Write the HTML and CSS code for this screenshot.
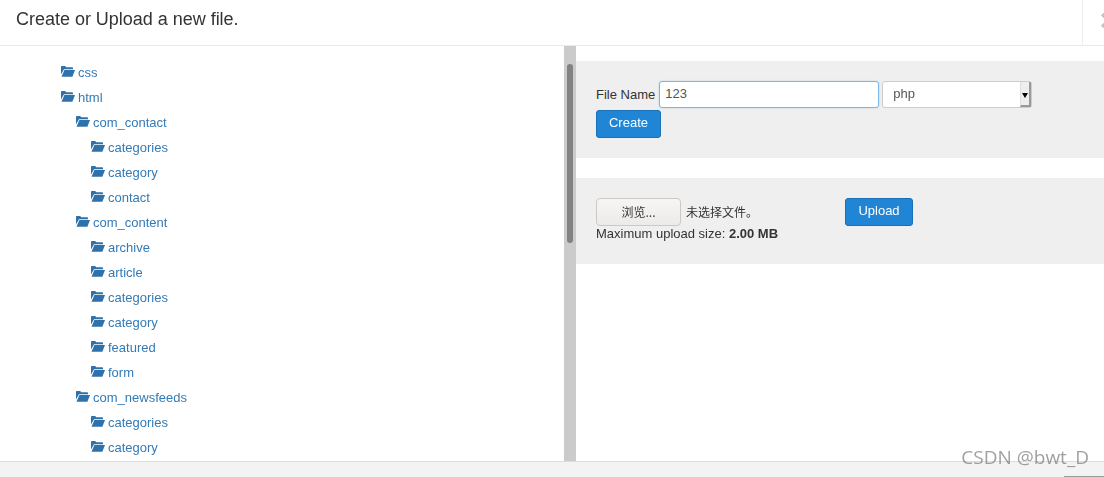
FILE: index.html
```html
<!DOCTYPE html>
<html lang="en">
<head>
  <meta charset="UTF-8">
  <title>Create or Upload a new file</title>
  <link rel="stylesheet" href="styles.css">
</head>
<body>
<svg class="sprite" width="0" height="0">
  <symbol id="folder" viewBox="0 0 14 11">
    <path d="M0 1C0 .4.4 0 1 0h3.2l1 1.3H11c.6 0 1 .4 1 1v1H3L0 8.4z"/>
    <path d="M3.4 3.9H14L11.4 10.8H.5z"/>
  </symbol>
</svg>

<div class="modal">
  <div class="modal-header">
    <h3>Create or Upload a new file.</h3>
    <div class="close-box">
      <svg class="close" viewBox="0 0 14 14"><path d="M1 1l12 12M13 1L1 13"/></svg>
    </div>
  </div>

  <div class="modal-body">
    <div class="tree-col">
      <ul class="tree">
        <li><a href="#"><svg class="icon"><use href="#folder"/></svg>css</a></li>
        <li><a href="#"><svg class="icon"><use href="#folder"/></svg>html</a>
          <ul>
            <li><a href="#"><svg class="icon"><use href="#folder"/></svg>com_contact</a>
              <ul>
                <li><a href="#"><svg class="icon"><use href="#folder"/></svg>categories</a></li>
                <li><a href="#"><svg class="icon"><use href="#folder"/></svg>category</a></li>
                <li><a href="#"><svg class="icon"><use href="#folder"/></svg>contact</a></li>
              </ul>
            </li>
            <li><a href="#"><svg class="icon"><use href="#folder"/></svg>com_content</a>
              <ul>
                <li><a href="#"><svg class="icon"><use href="#folder"/></svg>archive</a></li>
                <li><a href="#"><svg class="icon"><use href="#folder"/></svg>article</a></li>
                <li><a href="#"><svg class="icon"><use href="#folder"/></svg>categories</a></li>
                <li><a href="#"><svg class="icon"><use href="#folder"/></svg>category</a></li>
                <li><a href="#"><svg class="icon"><use href="#folder"/></svg>featured</a></li>
                <li><a href="#"><svg class="icon"><use href="#folder"/></svg>form</a></li>
              </ul>
            </li>
            <li><a href="#"><svg class="icon"><use href="#folder"/></svg>com_newsfeeds</a>
              <ul>
                <li><a href="#"><svg class="icon"><use href="#folder"/></svg>categories</a></li>
                <li><a href="#"><svg class="icon"><use href="#folder"/></svg>category</a></li>
              </ul>
            </li>
          </ul>
        </li>
      </ul>
    </div>

    <div class="scrollbar"><div class="thumb"></div></div>

    <div class="form-col">
      <form class="well well-create">
        <div class="create-row">
          <label>File Name</label>
          <input class="name-input" type="text" value="123">
          <div class="fake-select">
            <span>php</span>
            <span class="select-btn"><i class="caret"></i></span>
          </div>
        </div>
        <button class="btn" type="button">Create</button>
      </form>

      <form class="well well-upload">
        <div class="upload-row">
          <div class="file-field">
            <button class="browse" type="button">浏览...</button>
            <span class="no-file">未选择文件。</span>
          </div>
          <button class="btn btn-upload" type="button">Upload</button>
        </div>
        <div class="max-size">Maximum upload size: <strong>2.00 MB</strong></div>
      </form>
    </div>
  </div>

  <div class="modal-footer"><div class="footer-edge"></div></div>
</div>

<div class="watermark">CSDN @bwt_D</div>
</body>
</html>
```

FILE: styles.css
```css
* {
  box-sizing: border-box;
}

html, body {
  margin: 0;
  height: 100%;
  overflow: hidden;
}

body {
  background: #fff;
  color: #333;
  font-family: "Liberation Sans", Arial, "Noto Sans CJK SC", sans-serif;
  font-size: 13px;
}

.sprite {
  display: block;
  height: 0;
}

.modal {
  display: flex;
  flex-direction: column;
  height: 477px;
  opacity: .999; /* own layer, gives plain grey text edges */
}

/* header */
.modal-header {
  display: flex;
  justify-content: space-between;
  height: 46px;
  flex: none;
  border-bottom: 1px solid #e9e9e9;
  overflow: hidden;
}

.modal-header h3 {
  margin: 0;
  padding: 9px 0 0 16px;
  font-size: 18px;
  font-weight: 400;
  line-height: 20px;
  letter-spacing: -.02px;
}

.close-box {
  width: 22px;
  border-left: 1px solid #eee;
  padding: 13px 0 0 18px;
  overflow: hidden;
}

.close {
  display: block;
  width: 15px;
  height: 15px;
  fill: none;
  stroke: #c4c4c4;
  stroke-width: 3.4;
}

/* body */
.modal-body {
  display: flex;
  flex: 1;
  min-height: 0;
}

.tree-col {
  width: 564px;
  flex: none;
  padding-top: 14px;
  overflow: hidden;
}

.tree {
  padding-left: 61px;
}

.tree, .tree ul {
  margin: 0;
  list-style: none;
}

.tree ul {
  padding-left: 15px;
}

.tree a {
  display: flex;
  align-items: center;
  height: 25px;
  color: #337ab7;
  text-decoration: none;
}

.icon {
  width: 14px;
  height: 11px;
  margin: -2px 3px 0 0;
  fill: #2f71ab;
  flex: none;
}

.scrollbar {
  width: 12px;
  flex: none;
  padding: 18px 3px 0;
  background: #cbcbcb;
}

.thumb {
  height: 179px;
  border-radius: 3px;
  background: #808382;
}

.form-col {
  flex: 1;
  padding-top: 15px;
}

.well {
  background: #efefef;
  padding-left: 20px;
}

.well-create {
  height: 97px;
  padding-top: 20px;
  margin-bottom: 20px;
}

.well-upload {
  height: 86px;
  padding-top: 20px;
}

.create-row {
  display: flex;
  align-items: center;
  height: 27px;
  margin-bottom: 2px;
}

.create-row label {
  margin-right: 4px;
}

.name-input {
  width: 220px;
  height: 27px;
  margin-right: 3px;
  padding: 0 5px 2px;
  border: 1px solid #7ab8ec;
  border-radius: 3px;
  background: #fff;
  color: #555;
  font: 13px "Liberation Sans", Arial, sans-serif;
  outline: none;
  box-shadow: 0 0 2px rgba(102, 175, 233, .4);
}

.fake-select {
  display: flex;
  justify-content: space-between;
  width: 150px;
  height: 27px;
  padding-left: 10px;
  border: 1px solid #ccc;
  border-radius: 3px;
  background: #fff;
  color: #555;
  line-height: 23px;
}

.select-btn {
  display: flex;
  align-items: center;
  justify-content: center;
  width: 11px;
  padding-top: 3px;
  border-left: 1px solid #ddd;
  background: #eee;
  border-right: 2px solid #999;
  border-bottom: 2px solid #999;
}

.caret {
  border-top: 5px solid #000;
  border-left: 3.5px solid transparent;
  border-right: 3.5px solid transparent;
}

.btn {
  display: block;
  width: 65px;
  height: 28px;
  padding: 0 0 3px;
  border: 1px solid #1b6fb5;
  border-radius: 3px;
  background: #2185d5;
  color: #fff;
  font: 13px "Liberation Sans", Arial, sans-serif;
}

.upload-row {
  display: flex;
  height: 28px;
}

.file-field {
  display: flex;
  align-items: center;
  width: 249px;
}

.browse {
  width: 85px;
  height: 28px;
  margin-right: 5px;
  padding: 0 0 2px;
  border: 1px solid #ccc8c4;
  border-radius: 4px;
  background: linear-gradient(#f6f5f4, #edebe9);
  color: #333;
  font: 12px "Noto Sans CJK SC", sans-serif;
}

.no-file {
  margin-top: -2px;
  font-family: "Noto Sans CJK SC", sans-serif;
  font-size: 12px;
}

.btn-upload {
  width: 68px;
}

.max-size {
  line-height: 15px;
}

/* footer */
.modal-footer {
  display: flex;
  flex-direction: column;
  justify-content: flex-end;
  align-items: flex-end;
  height: 16px;
  flex: none;
  border-top: 1px solid #ddd;
  background: #f3f3f3;
}

.footer-edge {
  width: 40px;
  height: 1px;
  background: #9a9a9a;
}

/* site watermark lies over the footer */
.watermark {
  position: absolute;
  right: 15px;
  top: 445px;
  color: rgba(120, 120, 120, .7);
  font-family: "Open Sans", sans-serif;
  font-size: 19px;
  line-height: 24px;
}
```
